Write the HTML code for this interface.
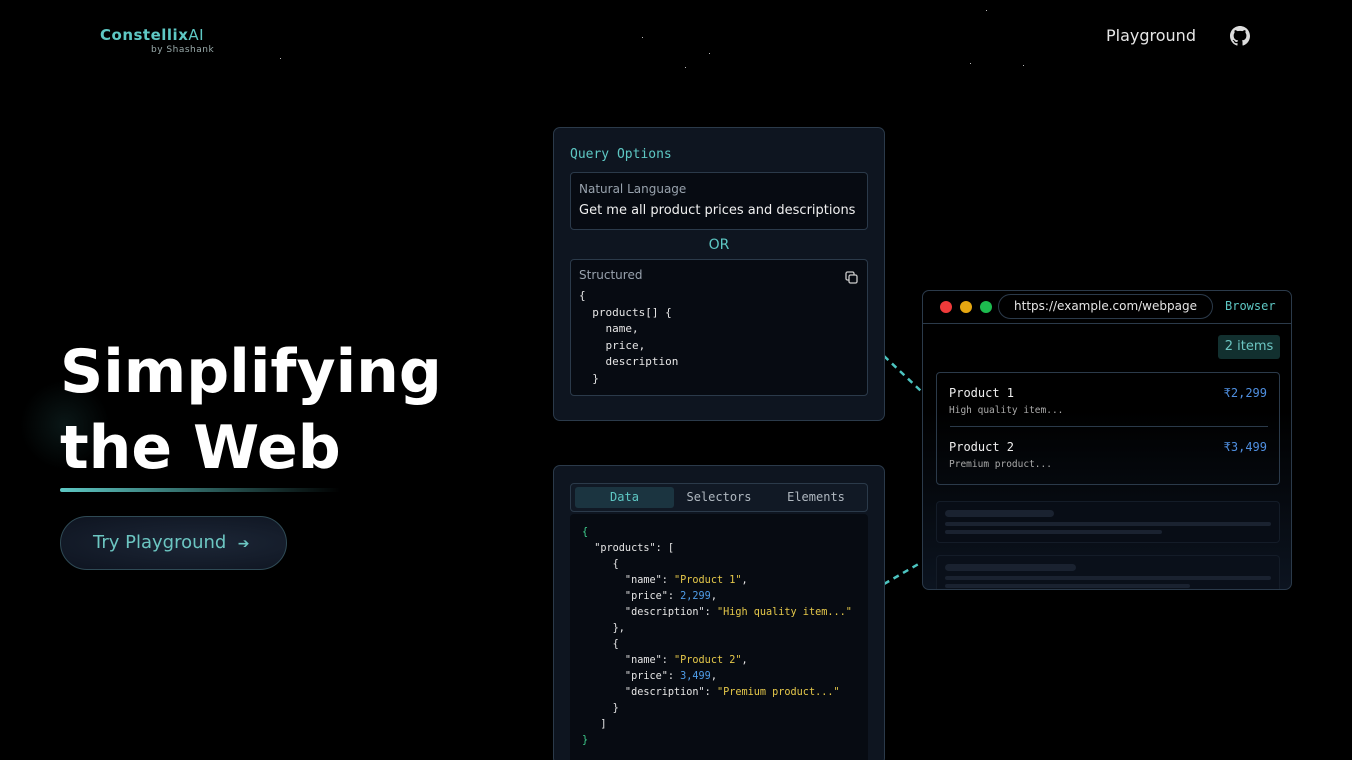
<!DOCTYPE html>
<html><head><meta charset="utf-8"><style>
*{margin:0;padding:0;box-sizing:border-box}
html,body{width:1352px;height:760px;overflow:hidden}
body{background:#000;position:relative;font-family:"DejaVu Sans","Liberation Sans",sans-serif;color:#fff}
.abs{position:absolute}
.mono{font-family:"DejaVu Sans Mono","Liberation Mono",monospace}
.card{position:absolute;background:#0e1520;border:1px solid #2b3a4a;border-radius:7px}
.inner{position:absolute;background:#070b12;border:1px solid #2b3a4a;border-radius:4px}
.star{position:absolute;width:1px;height:1px;background:#bbb}
</style></head><body>
<div class="star" style="left:986px;top:10px"></div>
<div class="star" style="left:642px;top:37px"></div>
<div class="star" style="left:709px;top:53px"></div>
<div class="star" style="left:970px;top:63px"></div>
<div class="star" style="left:1023px;top:65px"></div>
<div class="star" style="left:685px;top:67px"></div>
<div class="star" style="left:280px;top:58px"></div>

<div class="abs" style="left:100px;top:26px;font-size:15px;font-weight:bold;color:#5ec8c4;letter-spacing:0.5px">Constellix<span style="font-weight:normal">AI</span></div>
<div class="abs" style="left:151px;top:45px;font-size:9px;color:#9aa;letter-spacing:0.5px">by Shashank</div>
<div class="abs" style="left:1106px;top:26px;font-size:16px;color:#e6e6e6">Playground</div>
<svg class="abs" style="left:1230px;top:26px" width="20" height="20" viewBox="0 0 16 16"><path fill="#ddd" d="M8 0C3.58 0 0 3.58 0 8c0 3.540 2.29 6.53 5.47 7.59.4.07.55-.17.55-.38 0-.19-.01-.82-.01-1.49-2.010.37-2.530-.49-2.690-.94-.09-.23-.48-.94-.82-1.13-.28-.15-.68-.52-.01-.53.63-.01 1.08.58 1.23.82.72 1.21 1.87.87 2.33.66.07-.52.28-.87.51-1.07-1.78-.2-3.64-.89-3.64-3.95 0-.87.31-1.59.82-2.15-.08-.2-.36-1.02.08-2.12 0 0 .67-.21 2.2.82.64-.18 1.32-.27 2-.27.68 0 1.36.09 2 .27 1.53-1.04 2.2-.82 2.2-.82.44 1.1.16 1.92.08 2.12.51.56.82 1.27.82 2.15 0 3.07-1.87 3.75-3.65 3.95.29.25.54.73.54 1.48 0 1.07-.01 1.93-.01 2.2 0 .21.15.46.55.38A8.013 8.013 0 0016 8c0-4.42-3.58-8-8-8z"/></svg>

<div class="abs" style="left:20px;top:380px;width:90px;height:90px;border-radius:50%;background:radial-gradient(circle,rgba(40,90,90,0.25),rgba(0,0,0,0) 70%)"></div>
<div class="abs" style="left:60px;top:334px;font-size:60px;font-weight:bold;line-height:76px;white-space:nowrap">Simplifying<br>the Web</div>
<div class="abs" style="left:60px;top:488px;width:280px;height:4px;border-radius:2px;background:linear-gradient(90deg,#5ec8c4,rgba(94,200,196,0.3) 70%,rgba(0,0,0,0))"></div>
<div class="abs" style="left:60px;top:516px;width:227px;height:54px;border-radius:27px;border:1px solid #2f4a55;background:radial-gradient(ellipse at 60% 50%,#1c2636,#0e1420);font-size:18px;color:#6cc6c2;padding:15px 0 0 32px">Try Playground &nbsp;<span style="font-size:14px">➔</span></div>

<svg class="abs" style="left:880px;top:350px" width="50" height="240"><path d="M4 6 L42 42" stroke="#4cc4c0" stroke-width="2.5" stroke-dasharray="6 5"/><path d="M4 234 L42 212" stroke="#4cc4c0" stroke-width="2.5" stroke-dasharray="6 5"/></svg>

<div class="card" style="left:553px;top:127px;width:332px;height:294px">
 <div class="abs mono" style="left:16px;top:19px;font-size:13px;color:#5ec8c4">Query Options</div>
 <div class="inner" style="left:16px;top:44px;width:298px;height:58px">
  <div class="abs" style="left:8px;top:9px;font-size:12px;color:#98a2ad">Natural Language</div>
  <div class="abs" style="left:8px;top:30px;font-size:13px;color:#f0f0f0">Get me all product prices and descriptions</div>
 </div>
 <div class="abs" style="left:0;width:330px;top:109px;text-align:center;font-size:14px;color:#5ec8c4">OR</div>
 <div class="inner" style="left:16px;top:131px;width:298px;height:137px">
  <div class="abs" style="left:8px;top:8px;font-size:12px;color:#98a2ad">Structured</div>
  <svg class="abs" style="left:274px;top:11px" width="13" height="13" viewBox="0 0 13 13"><rect x="1" y="1" width="8" height="8" rx="1.5" fill="none" stroke="#ccc" stroke-width="1.3"/><rect x="4" y="4" width="8" height="8" rx="1.5" fill="#070b12" stroke="#ccc" stroke-width="1.3"/></svg>
  <pre class="abs mono" style="left:8px;top:28px;font-size:11px;line-height:16.5px;color:#e6e6e6">{
  products[] {
    name,
    price,
    description
  }</pre>
 </div>
</div>

<div class="card" style="left:553px;top:465px;width:332px;height:300px">
 <div class="inner" style="left:16px;top:17px;width:298px;height:29px;background:#111925">
  <div class="abs mono" style="left:4px;top:3px;width:99px;height:21px;background:#1b3440;border-radius:3px;color:#5ec8c4;font-size:12px;text-align:center;line-height:21px">Data</div>
  <div class="abs mono" style="left:108px;top:3px;width:80px;color:#b0b8c0;font-size:12px;text-align:center;line-height:21px">Selectors</div>
  <div class="abs mono" style="left:205px;top:3px;width:80px;color:#b0b8c0;font-size:12px;text-align:center;line-height:21px">Elements</div>
 </div>
 <div class="abs" style="left:16px;top:48px;width:298px;height:260px;background:#070b12;border-radius:4px"></div>
 <pre class="abs mono" style="left:28px;top:59px;font-size:10.2px;line-height:16px;color:#e6e6e6"><span style="color:#3fcf8e">{</span>
  "products": [
     {
       "name": <span style="color:#e5c84a">"Product 1"</span>,
       "price": <span style="color:#4f9de8">2,299</span>,
       "description": <span style="color:#e5c84a">"High quality item..."</span>
     },
     {
       "name": <span style="color:#e5c84a">"Product 2"</span>,
       "price": <span style="color:#4f9de8">3,499</span>,
       "description": <span style="color:#e5c84a">"Premium product..."</span>
     }
   ]
<span style="color:#3fcf8e">}</span></pre>
</div>

<div class="card" style="left:922px;top:290px;width:370px;height:300px;background:linear-gradient(#000 40%,#0c1420);overflow:hidden">
 <div class="abs" style="left:0;top:0;width:370px;height:33px;border-bottom:1px solid #2b3a4a"></div>
 <div class="abs" style="left:17px;top:10px;width:12px;height:12px;border-radius:50%;background:#ef3a3a"></div>
 <div class="abs" style="left:37px;top:10px;width:12px;height:12px;border-radius:50%;background:#e5a711"></div>
 <div class="abs" style="left:57px;top:10px;width:12px;height:12px;border-radius:50%;background:#1dbb4f"></div>
 <div class="abs" style="left:75px;top:3px;width:215px;height:25px;border:1px solid #2b3a4a;border-radius:13px;font-size:12px;color:#e6e6e6;text-align:center;line-height:23px">https://example.com/webpage</div>
 <div class="abs mono" style="left:302px;top:8px;font-size:12px;color:#5ec8c4">Browser</div>
 <div class="abs" style="left:295px;top:44px;width:62px;height:24px;background:#12302f;border-radius:3px;color:#6cc6c2;font-size:13px;text-align:center;line-height:24px">2 items</div>
 <div class="abs" style="left:13px;top:81px;width:344px;height:113px;border:1px solid #2b3a4a;border-radius:4px">
  <div class="abs mono" style="left:12px;top:13px;font-size:12px;color:#eee">Product 1</div>
  <div class="abs mono" style="right:12px;top:13px;font-size:12px;color:#4f8fe0">₹2,299</div>
  <div class="abs mono" style="left:12px;top:32px;font-size:9.5px;color:#aaa">High quality item...</div>
  <div class="abs" style="left:13px;top:53px;width:318px;height:1px;background:#2b3a4a"></div>
  <div class="abs mono" style="left:12px;top:67px;font-size:12px;color:#eee">Product 2</div>
  <div class="abs mono" style="right:12px;top:67px;font-size:12px;color:#4f8fe0">₹3,499</div>
  <div class="abs mono" style="left:12px;top:86px;font-size:9.5px;color:#aaa">Premium product...</div>
 </div>
 <div class="abs" style="left:13px;top:210px;width:344px;height:42px;border:1px solid #141c28;border-radius:4px;background:#080d16">
  <div class="abs" style="left:8px;top:8px;width:109px;height:7px;border-radius:4px;background:#1a2230"></div>
  <div class="abs" style="left:8px;top:20px;width:326px;height:4px;border-radius:2px;background:#1a2230"></div>
  <div class="abs" style="left:8px;top:28px;width:217px;height:4px;border-radius:2px;background:#1a2230"></div>
 </div>
 <div class="abs" style="left:13px;top:264px;width:344px;height:42px;border:1px solid #141c28;border-radius:4px;background:#0a101a">
  <div class="abs" style="left:8px;top:8px;width:131px;height:7px;border-radius:4px;background:#1a2230"></div>
  <div class="abs" style="left:8px;top:20px;width:326px;height:4px;border-radius:2px;background:#1a2230"></div>
  <div class="abs" style="left:8px;top:28px;width:245px;height:4px;border-radius:2px;background:#1a2230"></div>
 </div>
</div>
</body></html>
